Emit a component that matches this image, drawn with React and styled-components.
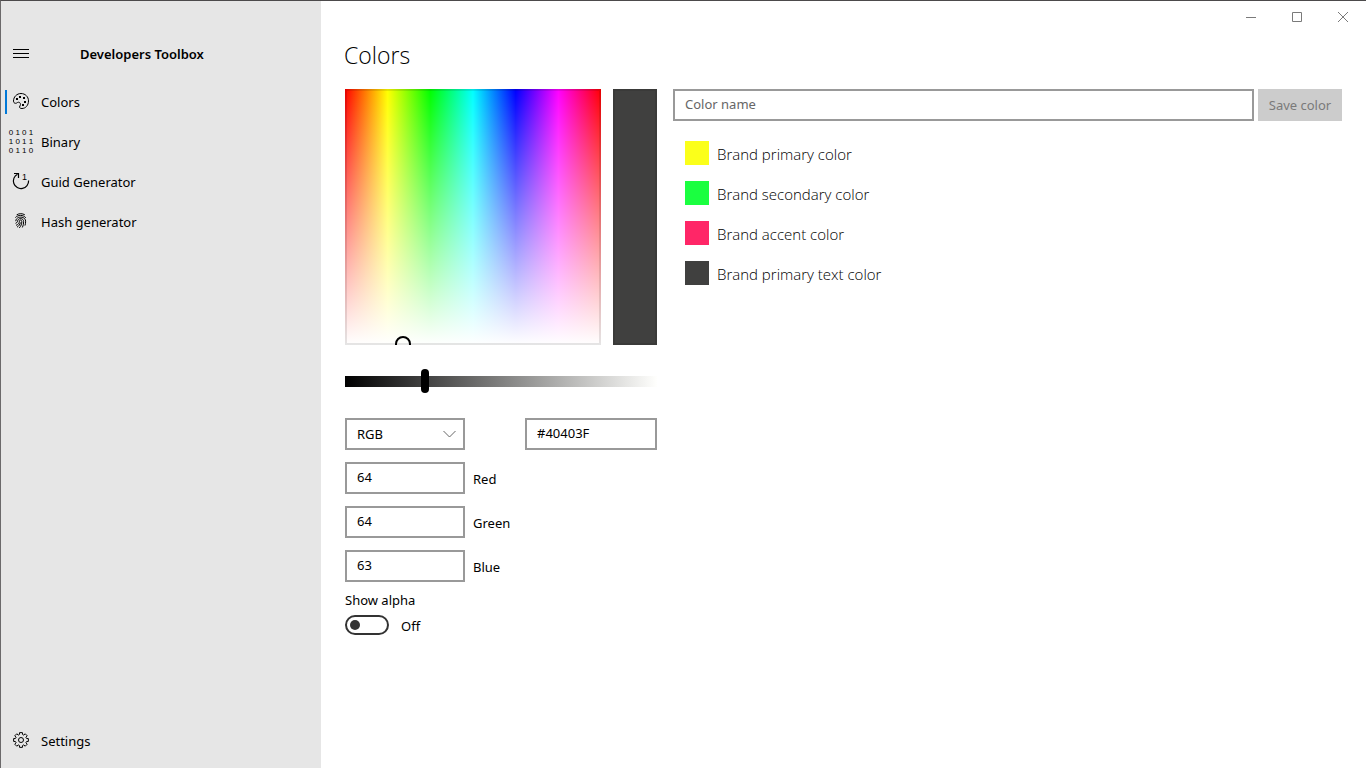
import React, { useState } from "react";
import styled, { createGlobalStyle } from "styled-components";

const Global = createGlobalStyle`
	*, *::before, *::after { box-sizing: border-box; margin: 0; padding: 0; }
	html, body, #root { height: 100%; }
	body { background: #fff; color: #000; font: 14px/20px "Noto Sans", "Open Sans", sans-serif; }
	button, input, select { font: inherit; color: inherit; }
	svg { display: block; }
`;

const Window = styled.div`
	display: flex;
	min-height: 100%;
	border-top: 1px solid #4c4a4b;
	border-left: 1px solid #6b696a;
`;

const Sidebar = styled.aside`
	flex: 0 0 320px;
	display: flex;
	flex-direction: column;
	padding: 33px 0 7px;
	background: #e6e6e6;
`;

const SidebarHeader = styled.header`
	display: flex;
	align-items: center;
	gap: 39px;
	height: 40px;
	margin-bottom: 8px;
`;

const MenuButton = styled.button`
	display: grid;
	place-items: center;
	width: 40px;
	height: 40px;
	border: 0;
	background: none;
`;

const AppName = styled.h1`
	font-size: 13px;
	font-weight: 600;
`;

const Nav = styled.nav`
	flex: 1;
	display: flex;
	flex-direction: column;
`;

const NavItem = styled.a`
	display: flex;
	align-items: center;
	height: 40px;
	color: #000;
	font-size: 13px;
	text-decoration: none;
	background: ${(p) => (p.$active ? "linear-gradient(#0078d7, #0078d7) 4px 50% / 2px 24px no-repeat" : "none")};
	&:last-child { margin-top: auto; }
`;

const NavIcon = styled.span`
	display: grid;
	place-items: center;
	width: 40px;
	height: 40px;
	padding-bottom: 2px;
`;

const Bits = styled.span`
	font: 8px/9px "Liberation Sans", Arial, sans-serif;
	white-space: pre;
`;

const Main = styled.main`
	flex: 1;
	min-width: 0;
`;

const TitleBar = styled.div`
	display: flex;
	justify-content: flex-end;
`;

const CaptionButton = styled.button`
	display: grid;
	place-items: center;
	width: 46px;
	height: 32px;
	border: 0;
	background: none;
	color: #7a7a7a;
`;

const PageTitle = styled.h2`
	height: 56px;
	padding: 6px 23px 0;
	font: 300 23px/32px "Open Sans", "Noto Sans", sans-serif;
`;

const Columns = styled.div`
	display: flex;
	gap: 16px;
	padding: 0 24px 24px;
`;

const Picker = styled.section`
	flex: 0 0 312px;
	display: flex;
	flex-direction: column;
`;

const PickerTop = styled.div`
	display: flex;
	gap: 12px;
	height: 256px;
`;

const Spectrum = styled.div`
	position: relative;
	flex: 0 0 256px;
	overflow: hidden;
	background:
		linear-gradient(to bottom, rgba(255, 255, 255, 0), #fff),
		linear-gradient(to right, #f00, #ff0, #0f0, #0ff, #00f, #f0f, #f00);
	&::after {
		content: "";
		position: absolute;
		inset: 0;
		border: 2px solid rgba(0, 0, 0, 0.1);
	}
`;

const SpectrumThumb = styled.span`
	position: absolute;
	left: 50px;
	top: 247px;
	z-index: 1;
	width: 16px;
	height: 16px;
	border: 2px solid #000;
	border-radius: 50%;
`;

const Preview = styled.div`
	flex: 1;
	background: #40403f;
	border: 2px solid #3a3a39;
`;

const ValueSlider = styled.input`
	appearance: none;
	width: 100%;
	height: 24px;
	margin: 24px 0 25px;
	background: linear-gradient(to right, #000, #fffffd) 0 7px / 100% 11px no-repeat;
	&::-webkit-slider-thumb {
		appearance: none;
		width: 8px;
		height: 24px;
		border-radius: 4px;
		background: #000;
	}
`;

const Fields = styled.div`
	display: flex;
	flex-direction: column;
	gap: 12px;
`;

const FieldRow = styled.div`
	display: flex;
	align-items: center;
	justify-content: ${(p) => (p.$spread ? "space-between" : "flex-start")};
	gap: 8px;
	font-size: 13px;
`;

const TextBox = styled.input`
	width: ${(p) => p.$width || "120px"};
	height: 32px;
	padding: 0 10px 2px;
	border: 2px solid #999;
	background: #fff;
	font-size: 13px;
	&::placeholder { color: #666; opacity: 1; }
`;

const SelectWrap = styled.div`
	position: relative;
	width: 120px;
	svg {
		position: absolute;
		right: 9px;
		top: 12px;
		pointer-events: none;
	}
`;

const Select = styled.select`
	appearance: none;
	width: 100%;
	height: 32px;
	padding: 0 10px;
	border: 2px solid #999;
	border-radius: 0;
	background: #fff;
	font-size: 13px;
`;

const FieldLabel = styled.label`
	font-size: 13px;
	padding-top: 2px;
`;

const AlphaLabel = styled.label`
	margin: 8px 0 5px;
	font-size: 13px;
`;

const ToggleRow = styled.div`
	display: flex;
	align-items: center;
	gap: 12px;
	height: 20px;
	font-size: 13px;
	span { padding-top: 2px; }
`;

const Toggle = styled.input`
	appearance: none;
	display: flex;
	align-items: center;
	justify-content: ${(p) => (p.checked ? "flex-end" : "flex-start")};
	width: 44px;
	height: 20px;
	padding: 0 3px;
	border: 2px solid #333;
	border-radius: 10px;
	&::before {
		content: "";
		width: 10px;
		height: 10px;
		border-radius: 50%;
		background: #333;
	}
`;

const Saved = styled.section`
	flex: 1;
	min-width: 0;
`;

const SaveForm = styled.form`
	display: flex;
	gap: 4px;
`;

const SaveButton = styled.button`
	flex: 0 0 84px;
	height: 32px;
	border: 0;
	background: #ccc;
	color: #7a7a7a;
	font-size: 13px;
`;

const ColorList = styled.ul`
	padding: 12px;
	list-style: none;
`;

const ColorItem = styled.li`
	display: flex;
	align-items: center;
	gap: 8px;
	height: 40px;
	font: 300 15px/24px "Open Sans", "Noto Sans", sans-serif;
`;

const Swatch = styled.span`
	width: 24px;
	height: 24px;
	background: ${(p) => p.$color};
`;

const ColorName = styled.span`
	padding-top: 2px;
`;

const PaletteIcon = () => (
	<svg width="16" height="16" viewBox="0 0 16 16" fill="none" stroke="#000">
		<path d="M8 .5c4.200 0 7.500 3.200 7.500 7.400 0 4.400-2.900 7.600-6.500 7.600-1.600 0-2.500-.6-2.500-1.500 0-.8 1-1.300 1-2.500 0-1.400-.9-2.300-2-2.300-1.200 0-1.500 1.100-3 1.100C1.200 10.300.5 9.300.5 8 .5 3.900 3.800.5 8 .5z" />
		<g fill="#000" stroke="none">
			<rect x="3" y="5" width="2" height="2" />
			<rect x="6" y="3" width="2" height="2" />
			<rect x="10" y="4" width="2" height="2" />
			<rect x="11" y="8" width="2" height="2" />
			<rect x="9" y="11" width="2" height="2" />
		</g>
	</svg>
);

const BinaryIcon = () => (
	<Bits aria-hidden="true">{"0 1 0 1\n1 0 1 1\n0 1 1 0"}</Bits>
);

const GuidIcon = () => (
	<svg width="18" height="18" viewBox="0 0 18 18" fill="none" stroke="#000" aria-hidden="true">
		<path d="M5.500 2.200A7.600 7.600 0 1 0 16.600 8.500" strokeWidth="1.200" />
		<path d="M2 1.500h4.500v4.500" strokeWidth="1.200" />
		<text x="10" y="8" fill="#000" stroke="none" fontFamily="Liberation Sans, sans-serif" fontSize="9">1</text>
	</svg>
);

const FingerprintIcon = () => (
	<svg width="16" height="16" viewBox="0 0 16 16" fill="none" stroke="#000" strokeLinecap="round">
		<path d="M4 1.600C6.200.3 9.300.3 11.500 1.600" />
		<path d="M2.600 4.300C5 1.700 10.200 1.600 12.600 4.500" />
		<path d="M2.800 7.800C2.800 2.800 12.600 2.800 12.600 8.200c0 1.500-.1 2.800-.5 4" />
		<path d="M2.900 10.200c2-.7 1.500-2.200 2-3.200 1.100-2.200 5.700-1.800 5.700 1.400 0 2.200-.3 4-1.100 5.700" />
		<path d="M3.400 12.200c2.300-.8 3-2.400 3-4 0-1.600 2.400-1.500 2.400.2 0 2.500-.7 4.700-2.300 6.300" />
		<path d="M4.400 13.900c1.500-.9 2.500-2.200 2.900-4" />
	</svg>
);

// eight rounded teeth around the hub
const gearPath = Array.from({ length: 8 }, (_, i) => {
	const at = (deg, r) => {
		const a = ((i * 45 + deg) * Math.PI) / 180;
		return `${(8 + r * Math.cos(a)).toFixed(2)} ${(8 + r * Math.sin(a)).toFixed(2)}`;
	};
	return `${i ? "L" : "M"}${at(-11, 7.5)}L${at(11, 7.5)}L${at(15, 5.8)}Q${at(22.5, 5.2)} ${at(30, 5.8)}`;
}).join("") + "Z";

const GearIcon = () => (
	<svg width="16" height="16" viewBox="0 0 16 16" fill="none" stroke="#000" strokeLinejoin="round">
		<path d={gearPath} />
		<circle cx="8" cy="8" r="2.500" />
	</svg>
);

const NAV = [
	{ id: "colors", label: "Colors", icon: <PaletteIcon /> },
	{ id: "binary", label: "Binary", icon: <BinaryIcon /> },
	{ id: "guid", label: "Guid Generator", icon: <GuidIcon /> },
	{ id: "hash", label: "Hash generator", icon: <FingerprintIcon /> },
];

const CHANNELS = [
	{ id: "red", label: "Red", value: 64 },
	{ id: "green", label: "Green", value: 64 },
	{ id: "blue", label: "Blue", value: 63 },
];

const SAVED = [
	{ name: "Brand primary color", color: "#fbff1a" },
	{ name: "Brand secondary color", color: "#1aff40" },
	{ name: "Brand accent color", color: "#ff2667" },
	{ name: "Brand primary text color", color: "#40403f" },
];

const App = () => {
	const [name, setName] = useState("");
	const [alpha, setAlpha] = useState(false);

	return (
		<>
			<Global />
			<Window>
				<Sidebar>
					<SidebarHeader>
						<MenuButton aria-label="Menu">
							<svg width="16" height="10" viewBox="0 0 16 10" stroke="#000">
								<path d="M0 .5h16M0 4.500h16M0 8.500h16" />
							</svg>
						</MenuButton>
						<AppName>Developers Toolbox</AppName>
					</SidebarHeader>
					<Nav>
						{NAV.map((item, i) => (
							<NavItem key={item.id} href={`#${item.id}`} $active={i === 0}>
								<NavIcon>{item.icon}</NavIcon>
								{item.label}
							</NavItem>
						))}
						<NavItem href="#settings">
							<NavIcon><GearIcon /></NavIcon>
							Settings
						</NavItem>
					</Nav>
				</Sidebar>
				<Main>
					<TitleBar>
						<CaptionButton aria-label="Minimize">
							<svg width="10" height="10" stroke="currentColor"><path d="M0 5.500h10" /></svg>
						</CaptionButton>
						<CaptionButton aria-label="Maximize">
							<svg width="10" height="10" stroke="currentColor" fill="none"><path d="M.5.5h9v9h-9z" /></svg>
						</CaptionButton>
						<CaptionButton aria-label="Close">
							<svg width="10" height="10" stroke="currentColor"><path d="M0 0l10 10M10 0L0 10" /></svg>
						</CaptionButton>
					</TitleBar>
					<PageTitle>Colors</PageTitle>
					<Columns>
						<Picker>
							<PickerTop>
								<Spectrum><SpectrumThumb /></Spectrum>
								<Preview />
							</PickerTop>
							<ValueSlider type="range" min="0" max="100" defaultValue="25" aria-label="Value" />
							<Fields>
								<FieldRow $spread>
									<SelectWrap>
										<Select aria-label="Color model" defaultValue="RGB">
											<option>RGB</option>
											<option>HSV</option>
										</Select>
										<svg width="13" height="8" viewBox="0 0 13 8" fill="none" stroke="#666">
											<path d="M.5 1l6 6 6-6" />
										</svg>
									</SelectWrap>
									<TextBox $width="132px" aria-label="Hex" defaultValue="#40403F" />
								</FieldRow>
								{CHANNELS.map((c) => (
									<FieldRow key={c.id}>
										<TextBox id={c.id} defaultValue={c.value} />
										<FieldLabel htmlFor={c.id}>{c.label}</FieldLabel>
									</FieldRow>
								))}
							</Fields>
							<AlphaLabel htmlFor="alpha">Show alpha</AlphaLabel>
							<ToggleRow>
								<Toggle
									id="alpha"
									type="checkbox"
									role="switch"
									checked={alpha}
									onChange={(e) => setAlpha(e.target.checked)}
								/>
								<span>{alpha ? "On" : "Off"}</span>
							</ToggleRow>
						</Picker>
						<Saved>
							<SaveForm onSubmit={(e) => e.preventDefault()}>
								<TextBox
									$width="100%"
									aria-label="Color name"
									placeholder="Color name"
									value={name}
									onChange={(e) => setName(e.target.value)}
								/>
								<SaveButton disabled={!name}>Save color</SaveButton>
							</SaveForm>
							<ColorList>
								{SAVED.map((c) => (
									<ColorItem key={c.name}>
										<Swatch $color={c.color} />
										<ColorName>{c.name}</ColorName>
									</ColorItem>
								))}
							</ColorList>
						</Saved>
					</Columns>
				</Main>
			</Window>
		</>
	);
};

export default App;
